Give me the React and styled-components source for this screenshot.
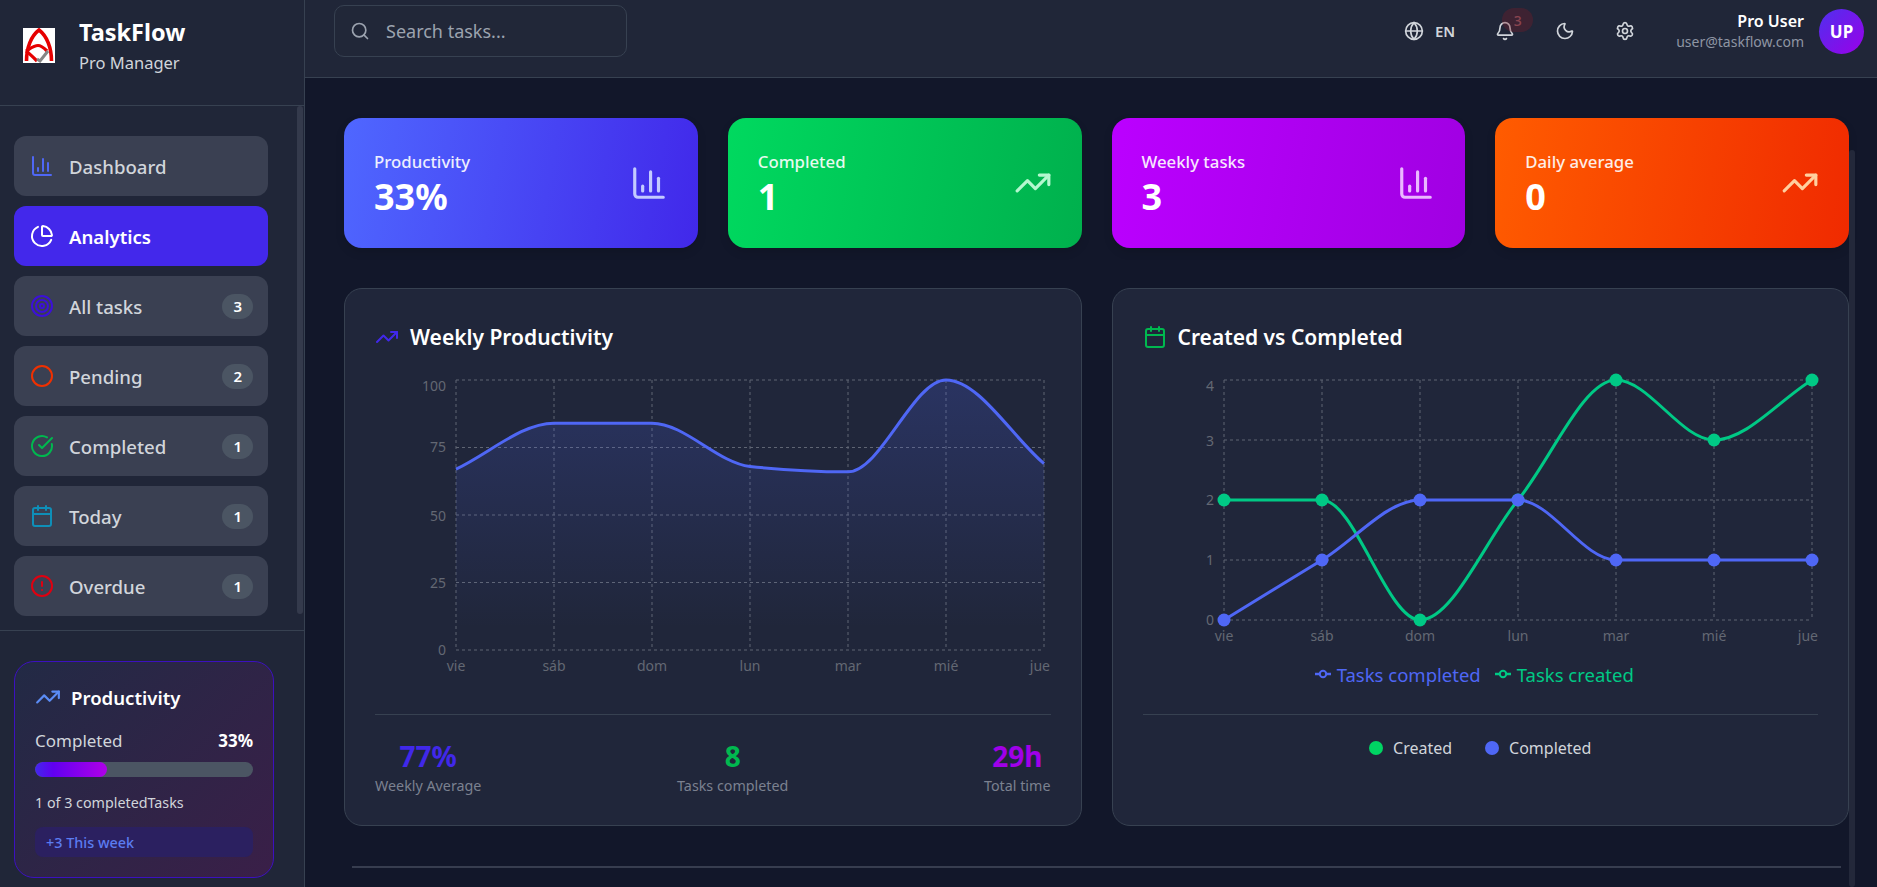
import React from 'react'
import styled, { createGlobalStyle } from 'styled-components'
import {
  ChartColumn,
  ChartPie,
  Target,
  Circle,
  CircleCheckBig,
  Calendar,
  CircleAlert,
  TrendingUp,
  Search,
  Globe,
  Bell,
  Moon,
  Settings,
} from 'lucide-react'

const GlobalStyle = createGlobalStyle`
  html, body {
    margin: 0;
    height: 100%;
    background: #12172a;
    overflow: hidden;
  }
  * {
    box-sizing: border-box;
  }
  body {
    font-family: "Noto Sans", "Open Sans", sans-serif;
  }
`

const NAV = [
  { label: 'Dashboard', icon: ChartColumn, color: '#4f67f5' },
  { label: 'Analytics', icon: ChartPie, color: '#ffffff', active: true },
  { label: 'All tasks', icon: Target, color: '#3c10d8', count: 3 },
  { label: 'Pending', icon: Circle, color: '#f03000', count: 2 },
  { label: 'Completed', icon: CircleCheckBig, color: '#00b84f', count: 1 },
  { label: 'Today', icon: Calendar, color: '#0e8fb8', count: 1 },
  { label: 'Overdue', icon: CircleAlert, color: '#e00010', count: 1 },
]

const STATS = [
  { label: 'Productivity', value: '33%', icon: ChartColumn, from: '#4f67ff', to: '#4128ea', tint: '#c3cbff' },
  { label: 'Completed', value: '1', icon: TrendingUp, from: '#00d95f', to: '#00b04d', tint: '#b4f7cf' },
  { label: 'Weekly tasks', value: '3', icon: ChartColumn, from: '#bb00ff', to: '#a000e2', tint: '#eab8ff' },
  { label: 'Daily average', value: '0', icon: TrendingUp, from: '#ff5c00', to: '#f02a00', tint: '#ffcf9f' },
]

const DAYS = ['vie', 'sáb', 'dom', 'lun', 'mar', 'mié', 'jue']
const WEEK = [67, 84, 84, 68, 66, 100, 69]
const CREATED = [2, 2, 0, 2, 4, 3, 4]
const DONE = [0, 1, 2, 2, 1, 1, 1]

const BLUE = '#4f67f5'
const GREEN = '#00c985'

// same curve as d3 curveMonotoneX
const monotonePath = pts => {
  const n = pts.length
  const h = pts.slice(1).map((p, i) => p[0] - pts[i][0])
  const s = pts.slice(1).map((p, i) => (p[1] - pts[i][1]) / h[i])
  const t = pts.map((_, i) => {
    if (i === 0) return (3 * s[0] - tangent(s[0], s[0], h[0], h[0])) / 2
    if (i === n - 1) return (3 * s[i - 1] - tangent(s[i - 1], s[i - 1], h[i - 1], h[i - 1])) / 2
    return tangent(s[i - 1], s[i], h[i - 1], h[i])
  })
  let d = `M${pts[0][0]},${pts[0][1]}`
  for (let i = 0; i < n - 1; i++) {
    const dx = h[i] / 3
    d += `C${pts[i][0] + dx},${pts[i][1] + dx * t[i]} ${pts[i + 1][0] - dx},${pts[i + 1][1] - dx * t[i + 1]} ${pts[i + 1][0]},${pts[i + 1][1]}`
  }
  return d
}

function tangent(s0, s1, h0, h1) {
  const p = (s0 * h1 + s1 * h0) / (h0 + h1)
  const sign = (Math.sign(s0) + Math.sign(s1)) || 0
  return sign * Math.min(Math.abs(s0), Math.abs(s1), 0.5 * Math.abs(p)) || 0
}

const PLOT = { left: 81, right: 669, top: 10 }

const Grid = ({ bottom, rows, ticks, tickYs }) => {
  const stepX = (PLOT.right - PLOT.left) / 6
  return (
    <g>
      {rows.map(y => (
        <GridLine key={y} x1={PLOT.left} x2={PLOT.right} y1={y} y2={y} />
      ))}
      {DAYS.map((_, i) => (
        <GridLine key={i} x1={PLOT.left + i * stepX} x2={PLOT.left + i * stepX} y1={PLOT.top} y2={bottom} />
      ))}
      {ticks.map((t, i) => (
        <AxisText key={t} x={PLOT.left - 10} y={tickYs[i]} textAnchor="end" dominantBaseline="middle">
          {t}
        </AxisText>
      ))}
      {DAYS.map((d, i) => {
        const last = i === DAYS.length - 1
        return (
          <AxisText
            key={d}
            x={last ? 675 : PLOT.left + i * stepX}
            y={bottom + 17}
            textAnchor={last ? 'end' : 'middle'}
            dominantBaseline="middle"
          >
            {d}
          </AxisText>
        )
      })}
    </g>
  )
}

const WeeklyChart = () => {
  const bottom = 280
  const stepX = (PLOT.right - PLOT.left) / 6
  const pts = WEEK.map((v, i) => [PLOT.left + i * stepX, bottom - v * 2.7])
  const line = monotonePath(pts)
  return (
    <ChartSvg width="675" height="320" viewBox="0 0 675 320">
      <defs>
        <linearGradient id="weekFill" x1="0" y1="0" x2="0" y2="1">
          <stop offset="5%" stopColor={BLUE} stopOpacity="0.2" />
          <stop offset="92%" stopColor={BLUE} stopOpacity="0" />
        </linearGradient>
      </defs>
      <Grid
        bottom={bottom}
        rows={[10, 77.5, 145, 212.5, 280]}
        ticks={[100, 75, 50, 25, 0]}
        tickYs={[17, 78, 147, 214, 281]}
      />
      <path d={`${line}L${PLOT.right},${bottom}L${PLOT.left},${bottom}Z`} fill="url(#weekFill)" />
      <path d={line} fill="none" stroke={BLUE} strokeWidth="3" />
    </ChartSvg>
  )
}

const Series = ({ values, color, bottom }) => {
  const stepX = (PLOT.right - PLOT.left) / 6
  const pts = values.map((v, i) => [PLOT.left + i * stepX, bottom - v * 60])
  return (
    <g>
      <path d={monotonePath(pts)} fill="none" stroke={color} strokeWidth="3" />
      {pts.map(p => (
        <circle key={p[0]} cx={p[0]} cy={p[1]} r="6.5" fill={color} />
      ))}
    </g>
  )
}

const CompareChart = () => {
  const bottom = 250
  return (
    <ChartSvg width="675" height="280" viewBox="0 0 675 280">
      <Grid
        bottom={bottom}
        rows={[10, 70, 130, 190, 250]}
        ticks={[4, 3, 2, 1, 0]}
        tickYs={[17, 72, 131, 191, 251]}
      />
      <Series values={CREATED} color={GREEN} bottom={bottom} />
      <Series values={DONE} color={BLUE} bottom={bottom} />
    </ChartSvg>
  )
}

const LegendMark = ({ color }) => (
  <svg width="16" height="14" viewBox="0 0 16 14">
    <line x1="0" x2="16" y1="7" y2="7" stroke={color} strokeWidth="2.5" />
    <circle cx="8" cy="7" r="3.2" fill="#20263a" stroke={color} strokeWidth="2" />
  </svg>
)

const LogoMark = () => (
  <svg width="32" height="35" viewBox="0 0 32 35">
    <rect width="32" height="35" fill="#ffffff" />
    <path d="M3.5 33 C3.5 20 8 8 16 2 C24 8 28.5 20 28.5 33" fill="none" stroke="#e60000" strokeWidth="3.6" />
    <path d="M3 23 C8 20 11 17.5 15 17.5 C18 17.5 21 20 24 23" fill="none" stroke="#e60000" strokeWidth="3.2" />
    <path d="M3 23 C7 26 10 29 14 33" fill="none" stroke="#e60000" strokeWidth="3.2" />
    <path d="M14 31 L17 33 L25 23" fill="none" stroke="#858585" strokeWidth="3" />
  </svg>
)

const App = () => (
  <Page>
    <GlobalStyle />
    <Sidebar>
      <Brand>
        <LogoMark />
        <BrandText>
          <BrandName>TaskFlow</BrandName>
          <BrandSub>Pro Manager</BrandSub>
        </BrandText>
      </Brand>
      <Nav>
        {NAV.map(({ label, icon: Icon, color, active, count }) => (
          <NavItem key={label} active={active}>
            <Icon size={24} color={color} strokeWidth={2} />
            <NavLabel>{label}</NavLabel>
            {count && <NavCount>{count}</NavCount>}
          </NavItem>
        ))}
        <NavScroll />
      </Nav>
      <SideFoot>
        <ProgressCard>
          <ProgressTitle>
            <TrendingUp size={26} color="#5b8cf5" />
            Productivity
          </ProgressTitle>
          <ProgressRow>
            <span>Completed</span>
            <strong>33%</strong>
          </ProgressRow>
          <ProgressTrack>
            <ProgressFill style={{ width: '33%' }} />
          </ProgressTrack>
          <ProgressNote>1 of 3 completedTasks</ProgressNote>
          <WeekTag>+3 This week</WeekTag>
        </ProgressCard>
      </SideFoot>
    </Sidebar>
    <Content>
      <Header>
        <SearchBox>
          <Search size={20} color="#9ca3af" />
          <SearchText>Search tasks...</SearchText>
        </SearchBox>
        <HeaderTools>
          <LangButton>
            <Globe size={20} />
            EN
          </LangButton>
          <BellWrap>
            <Bell size={20} />
            <BellBadge>3</BellBadge>
          </BellWrap>
          <ToolIcon>
            <Moon size={20} />
          </ToolIcon>
          <ToolIcon>
            <Settings size={20} />
          </ToolIcon>
          <UserBlock>
            <UserText>
              <UserName>Pro User</UserName>
              <UserMail>user@taskflow.com</UserMail>
            </UserText>
            <Avatar>UP</Avatar>
          </UserBlock>
        </HeaderTools>
      </Header>
      <Main>
        <StatGrid>
          {STATS.map(({ label, value, icon: Icon, from, to, tint }) => (
            <StatCard key={label} from={from} to={to}>
              <StatBody>
                <StatLabel>{label}</StatLabel>
                <StatValue>{value}</StatValue>
              </StatBody>
              <Icon size={38} color={tint} strokeWidth={2} />
            </StatCard>
          ))}
        </StatGrid>
        <ChartGrid>
          <ChartCard>
            <ChartTitle>
              <TrendingUp size={24} color="#4128ea" />
              Weekly Productivity
            </ChartTitle>
            <WeeklyChart />
            <Summary>
              <SummaryItem>
                <SummaryValue color="#4128ea">77%</SummaryValue>
                <SummaryLabel>Weekly Average</SummaryLabel>
              </SummaryItem>
              <SummaryItem>
                <SummaryValue color="#00b84f">8</SummaryValue>
                <SummaryLabel>Tasks completed</SummaryLabel>
              </SummaryItem>
              <SummaryItem>
                <SummaryValue color="#a000e8">29h</SummaryValue>
                <SummaryLabel>Total time</SummaryLabel>
              </SummaryItem>
            </Summary>
          </ChartCard>
          <ChartCard>
            <ChartTitle>
              <Calendar size={24} color="#00b84f" />
              Created vs Completed
            </ChartTitle>
            <CompareChart />
            <LineLegend>
              <LineLegendItem color={BLUE}>
                <LegendMark color={BLUE} />
                Tasks completed
              </LineLegendItem>
              <LineLegendItem color={GREEN}>
                <LegendMark color={GREEN} />
                Tasks created
              </LineLegendItem>
            </LineLegend>
            <DotLegend>
              <DotLegendItem>
                <Dot color="#00d563" />
                Created
              </DotLegendItem>
              <DotLegendItem>
                <Dot color={BLUE} />
                Completed
              </DotLegendItem>
            </DotLegend>
          </ChartCard>
        </ChartGrid>
        <SectionRule />
      </Main>
      <MainScroll />
    </Content>
  </Page>
)

export default App

// Styles
const Page = styled.div`
  display: flex;
  width: 100vw;
  height: 100vh;
  overflow: hidden;
  background: #12172a;
  color: #ffffff;
`

const Sidebar = styled.aside`
  width: 305px;
  flex: none;
  display: flex;
  flex-direction: column;
  background: #202638;
  border-right: 1px solid #374151;
`

const Brand = styled.div`
  height: 106px;
  flex: none;
  display: flex;
  align-items: center;
  gap: 24px;
  padding: 0 0 15px 23px;
  border-bottom: 1px solid #374151;
`

const BrandText = styled.div`
  display: flex;
  flex-direction: column;
  gap: 2px;
`

const BrandName = styled.div`
  font-size: 23.5px;
  line-height: 33px;
  font-weight: 700;
`

const BrandSub = styled.div`
  font-size: 16.5px;
  line-height: 24px;
  color: #d1d5db;
`

const Nav = styled.nav`
  position: relative;
  height: 525px;
  flex: none;
  display: flex;
  flex-direction: column;
  gap: 10px;
  padding: 30px 0 0 14px;
  border-bottom: 1px solid #374151;
`

const NavItem = styled.div`
  width: 254px;
  height: 60px;
  flex: none;
  display: flex;
  align-items: center;
  gap: 15px;
  padding: 0 15px 0 16px;
  border-radius: 12px;
  background: ${props => (props.active ? '#4328eb' : '#3a4052')};
  color: ${props => (props.active ? '#ffffff' : '#d1d5db')};
  font-size: 18.6px;
  font-weight: ${props => (props.active ? 600 : 500)};
`

const NavLabel = styled.span`
  flex: 1;
  padding-top: 1px;
`

const NavCount = styled.span`
  height: 25px;
  padding: 0 11px;
  display: flex;
  align-items: center;
  justify-content: center;
  border-radius: 13px;
  background: #4b5563;
  color: #ffffff;
  font-size: 15px;
  font-weight: 600;
`

const NavScroll = styled.div`
  position: absolute;
  top: 0;
  right: 1px;
  width: 6px;
  height: 508px;
  border-radius: 3px;
  background: #343a4c;
`

const SideFoot = styled.div`
  flex: 1;
  padding: 30px 0 0 14px;
`

const ProgressCard = styled.div`
  width: 260px;
  height: 217px;
  padding: 22px 20px 0;
  border: 1px solid #3c10c0;
  border-radius: 20px;
  background: linear-gradient(135deg, #222a45, #3a1f48);
`

const ProgressTitle = styled.div`
  display: flex;
  align-items: center;
  gap: 10px;
  height: 26px;
  font-size: 18.6px;
  font-weight: 600;
`

const ProgressRow = styled.div`
  display: flex;
  justify-content: space-between;
  align-items: center;
  margin-top: 18px;
  height: 24px;
  font-size: 17px;
  color: #d1d5db;
  strong {
    color: #ffffff;
    font-weight: 700;
  }
`

const ProgressTrack = styled.div`
  height: 15px;
  margin-top: 10px;
  border-radius: 8px;
  background: #4b5563;
  overflow: hidden;
`

const ProgressFill = styled.div`
  height: 100%;
  border-radius: 8px;
  background: linear-gradient(90deg, #4328eb, #6000f0 25%, #b000e8);
`

const ProgressNote = styled.div`
  margin-top: 15px;
  font-size: 14.3px;
  line-height: 22px;
  color: #d1d5db;
`

const WeekTag = styled.div`
  height: 30px;
  margin-top: 13px;
  padding-left: 11px;
  display: flex;
  align-items: center;
  border-radius: 8px;
  background: #2b2060;
  color: #5b7cf0;
  font-size: 14.4px;
  font-weight: 500;
`

const Content = styled.div`
  position: relative;
  flex: 1;
  min-width: 0;
  display: flex;
  flex-direction: column;
`

const Header = styled.header`
  height: 78px;
  flex: none;
  display: flex;
  align-items: center;
  justify-content: space-between;
  padding: 0 13px 15px 29px;
  background: #202638;
  border-bottom: 1px solid #374151;
`

const SearchBox = styled.div`
  width: 293px;
  height: 52px;
  margin-top: -1px;
  display: flex;
  align-items: center;
  gap: 16px;
  padding-left: 15px;
  border: 1px solid #374151;
  border-radius: 10px;
  background: #212738;
`

const SearchText = styled.span`
  font-size: 18px;
  color: #9ca3af;
`

const HeaderTools = styled.div`
  display: flex;
  align-items: center;
  color: #d1d5db;
`

const LangButton = styled.div`
  display: flex;
  align-items: center;
  gap: 11px;
  font-size: 15px;
  font-weight: 600;
`

const BellWrap = styled.div`
  position: relative;
  display: flex;
  margin-left: 40px;
`

const BellBadge = styled.span`
  position: absolute;
  top: -13px;
  left: 7px;
  width: 31px;
  height: 24px;
  display: flex;
  align-items: center;
  justify-content: center;
  border-radius: 12px;
  background: rgba(120, 30, 40, 0.35);
  color: #8a4450;
  font-size: 14px;
  font-weight: 500;
`

const ToolIcon = styled.div`
  display: flex;
  margin-left: 40px;
`

const UserBlock = styled.div`
  display: flex;
  align-items: center;
  gap: 15px;
  margin-left: 41px;
`

const UserText = styled.div`
  display: flex;
  flex-direction: column;
  align-items: flex-end;
`

const UserName = styled.div`
  font-size: 16px;
  line-height: 22px;
  font-weight: 600;
  color: #ffffff;
`

const UserMail = styled.div`
  font-size: 14px;
  line-height: 20px;
  color: #8e95a3;
`

const Avatar = styled.div`
  width: 45px;
  height: 45px;
  display: flex;
  align-items: center;
  justify-content: center;
  border-radius: 50%;
  background: linear-gradient(135deg, #4f30ee, #9a00e8);
  color: #ffffff;
  font-size: 17px;
  font-weight: 700;
`

const Main = styled.main`
  flex: 1;
  min-height: 0;
  overflow: hidden;
  padding: 40px 28px 0 39px;
`

const MainScroll = styled.div`
  position: absolute;
  top: 150px;
  right: 22px;
  bottom: 0;
  width: 6px;
  border-radius: 3px;
  background: #23283a;
`

const StatGrid = styled.div`
  display: grid;
  grid-template-columns: repeat(4, 1fr);
  gap: 30px;
`

const StatCard = styled.div`
  height: 130px;
  display: flex;
  align-items: center;
  justify-content: space-between;
  padding: 0 30px;
  border-radius: 18px;
  background: linear-gradient(100deg, ${props => props.from}, ${props => props.to});
  box-shadow: 0 4px 10px rgba(0, 0, 0, 0.12);
`

const StatBody = styled.div`
  margin-top: 3px;
`

const StatLabel = styled.div`
  font-size: 16.8px;
  line-height: 24px;
  font-weight: 500;
  opacity: 0.9;
`

const StatValue = styled.div`
  font-size: 36px;
  line-height: 46px;
  font-weight: 700;
`

const ChartGrid = styled.div`
  display: grid;
  grid-template-columns: repeat(2, 1fr);
  gap: 30px;
  margin-top: 40px;
`

const ChartCard = styled.section`
  height: 538px;
  padding: 30px;
  border: 1px solid #374151;
  border-radius: 18px;
  background: #20263a;
`

const ChartTitle = styled.h3`
  height: 36px;
  margin: 0 0 15px;
  display: flex;
  align-items: center;
  gap: 11px;
  font-size: 21px;
  font-weight: 600;
  color: #ffffff;
`

const ChartSvg = styled.svg`
  display: block;
  overflow: visible;
`

const GridLine = styled.line`
  stroke: #5f6573;
  stroke-width: 1;
  stroke-dasharray: 3 3;
`

const AxisText = styled.text`
  fill: #636873;
  font-size: 14px;
`

const Summary = styled.div`
  display: flex;
  justify-content: space-between;
  margin-top: 24px;
  padding-top: 23px;
  border-top: 1px solid #374151;
`

const SummaryItem = styled.div`
  display: flex;
  flex-direction: column;
  align-items: center;
`

const SummaryValue = styled.div`
  font-size: 28px;
  line-height: 36px;
  font-weight: 700;
  color: ${props => props.color};
`

const SummaryLabel = styled.div`
  margin-top: 2px;
  font-size: 14.3px;
  line-height: 20px;
  color: #7b8190;
`

const LineLegend = styled.div`
  height: 40px;
  margin-top: 4px;
  display: flex;
  align-items: center;
  justify-content: center;
  gap: 14px;
  padding-right: 12px;
`

const LineLegendItem = styled.span`
  display: flex;
  align-items: center;
  gap: 6px;
  color: ${props => props.color};
  font-size: 18.5px;
`

const DotLegend = styled.div`
  margin-top: 20px;
  padding-top: 20px;
  border-top: 1px solid #374151;
  display: flex;
  justify-content: center;
  gap: 33px;
`

const DotLegendItem = styled.span`
  display: flex;
  align-items: center;
  gap: 10px;
  font-size: 16px;
  line-height: 26px;
  color: #d1d5db;
`

const Dot = styled.span`
  width: 14px;
  height: 14px;
  border-radius: 50%;
  background: ${props => props.color};
`

const SectionRule = styled.div`
  height: 2px;
  margin: 40px 8px 0;
  background: #373d4f;
`
